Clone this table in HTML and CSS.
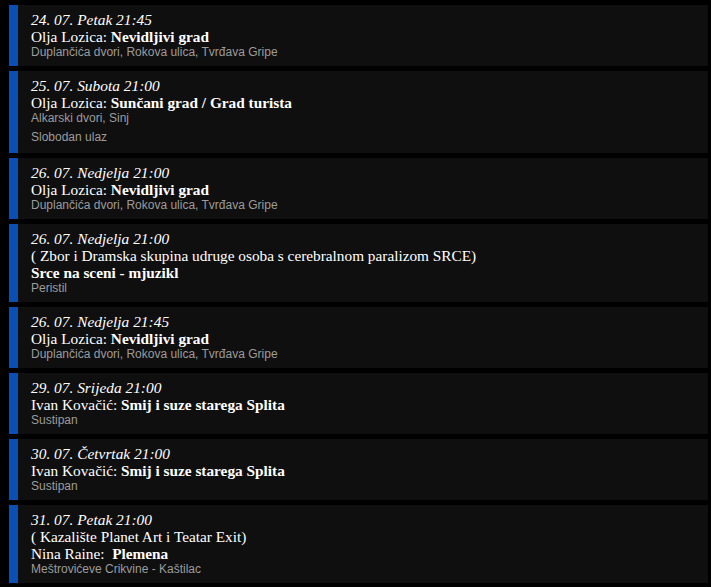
FILE: index.html
```html
<!DOCTYPE html>
<html lang="hr">
<head>
    <meta charset="UTF-8">
    <title>Program</title>
    <link rel="stylesheet" href="styles.css">
</head>
<body>
    <div class="events">
        <div class="event">
            <div class="date">24. 07. Petak 21:45</div>
            <div class="title">Olja Lozica: <b>Nevidljivi grad</b></div>
            <div class="place">Duplančića dvori, Rokova ulica, Tvrđava Gripe</div>
        </div>

        <div class="event">
            <div class="date">25. 07. Subota 21:00</div>
            <div class="title">Olja Lozica: <b>Sunčani grad / Grad turista</b></div>
            <div class="place">Alkarski dvori, Sinj</div>
            <div class="place note">Slobodan ulaz</div>
        </div>

        <div class="event">
            <div class="date">26. 07. Nedjelja 21:00</div>
            <div class="title">Olja Lozica: <b>Nevidljivi grad</b></div>
            <div class="place">Duplančića dvori, Rokova ulica, Tvrđava Gripe</div>
        </div>

        <div class="event">
            <div class="date">26. 07. Nedjelja 21:00</div>
            <div class="title">( Zbor i Dramska skupina udruge osoba s cerebralnom paralizom SRCE)</div>
            <div class="title"><b>Srce na sceni - mjuzikl</b></div>
            <div class="place">Peristil</div>
        </div>

        <div class="event">
            <div class="date">26. 07. Nedjelja 21:45</div>
            <div class="title">Olja Lozica: <b>Nevidljivi grad</b></div>
            <div class="place">Duplančića dvori, Rokova ulica, Tvrđava Gripe</div>
        </div>

        <div class="event">
            <div class="date">29. 07. Srijeda 21:00</div>
            <div class="title">Ivan Kovačić: <b>Smij i suze starega Splita</b></div>
            <div class="place">Sustipan</div>
        </div>

        <div class="event">
            <div class="date">30. 07. Četvrtak 21:00</div>
            <div class="title">Ivan Kovačić: <b>Smij i suze starega Splita</b></div>
            <div class="place">Sustipan</div>
        </div>

        <div class="event">
            <div class="date">31. 07. Petak 21:00</div>
            <div class="title">( Kazalište Planet Art i Teatar Exit)</div>
            <div class="title">Nina Raine:&nbsp; <b>Plemena</b></div>
            <div class="place">Meštrovićeve Crikvine - Kaštilac</div>
        </div>
    </div>
</body>
</html>
```

FILE: styles.css
```css
* {
    margin: 0;
    padding: 0;
    box-sizing: border-box;
}

body {
    background: #000;
    color: #fff;
    font-family: "Liberation Serif", serif;
}

.events {
    display: flex;
    flex-direction: column;
    gap: 5px;
    width: 699px;
    margin-left: 9px;
    padding-top: 5px;
}

.event {
    background: #0f0f0f;
    border-left: 9px solid #0a4fb4;
    padding: 6px 10px 6px 13px;
}

.date {
    font-style: italic;
    font-size: 15.4px;
    line-height: 17px;
}

.title {
    font-size: 15.3px;
    line-height: 17px;
}

.title b {
    font-weight: bold;
}

.place {
    font-family: "Liberation Sans", Arial, sans-serif;
    font-size: 12px;
    line-height: 15px;
    color: #9c9c9c;
}

.place.note {
    margin-top: 4px;
    margin-bottom: 2px;
}
```
